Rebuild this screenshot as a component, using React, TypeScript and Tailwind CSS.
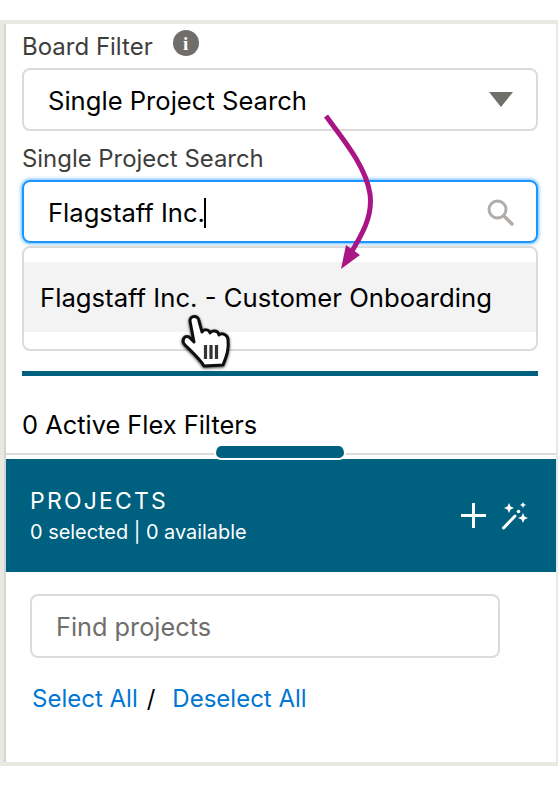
const font = { fontFamily: "Inter, 'Liberation Sans', sans-serif" }

function CurvedArrow() {
  return (
    <svg className="absolute left-[320px] top-[110px]" width="60" height="165" viewBox="0 0 60 165" fill="none">
      <path d="M6 6C22 28 46 56 50 84C53 106 42 125 29 146" stroke="#aa1585" strokeWidth="5" />
      <path d="M21 159L40 145L26 135Z" fill="#aa1585" />
    </svg>
  )
}

function HandCursor() {
  return (
    <svg className="absolute left-[175px] top-[312px]" width="60" height="64" viewBox="0 0 60 64">
      <defs>
        <filter id="soft" x="-20%" y="-20%" width="140%" height="140%">
          <feDropShadow dx="0" dy="1" stdDeviation="1.8" floodColor="#000" floodOpacity="0.75" />
        </filter>
      </defs>
      <path
        d="M15 9C15 3 23 3 24 9L27 20C29 17 34 17 35 21C37 18 43 18 44 23C47 20 53 23 53 28C54 37 52 43 48 53L29 54C25 47 16 39 10 33C6 29 9 23 14 25L19 30Z"
        fill="#fff"
        stroke="#111"
        strokeWidth="3"
        strokeLinejoin="round"
        filter="url(#soft)"
      />
      <path d="M30.5 33V47M36 33V47M41.5 33V47" stroke="#333" strokeWidth="3.2" />
    </svg>
  )
}

function SearchIcon() {
  return (
    <svg width="28" height="28" viewBox="0 0 28 28" fill="none" stroke="#b0adab">
      <circle cx="11.5" cy="11.5" r="8.5" strokeWidth="3" />
      <path d="M18 18L26 26" strokeWidth="3.4" strokeLinecap="round" />
    </svg>
  )
}

function PlusIcon() {
  return (
    <svg width="25" height="25" viewBox="0 0 25 25" fill="none" stroke="#fff" strokeWidth="3">
      <path d="M12.5 0V25M0 12.5H25" />
    </svg>
  )
}

function WandIcon() {
  return (
    <svg width="30" height="30" viewBox="5 3 30 30" fill="#fff">
      <path d="M8.5 30L20 18" stroke="#fff" strokeWidth="3" strokeLinecap="round" />
      <path d="M14 5L15.6 8.4L19 10L15.6 11.6L14 15L12.4 11.6L9 10L12.4 8.4Z" />
      <path d="M28 4L29 6L31 7L29 8L28 10L27 8L25 7L27 6Z" />
      <path d="M28 15L29.5 18.5L33 20L29.5 21.5L28 25L26.5 21.5L23 20L26.5 18.5Z" />
      <circle cx="23.5" cy="13.5" r="1.8" />
    </svg>
  )
}

export default function App() {
  return (
    <div className="relative h-[790px] w-[558px] overflow-hidden bg-white pt-[20px]" style={font}>
      <div className="h-[746px] border-y-4 border-r-2 border-l-4 border-[#e9e9e3]">
        <div className="flex h-full flex-col border-l-2 border-[#d4d4d2]">
          <div className="px-[16px]">
            <div className="flex h-[44px] items-center gap-[20px]">
              <span className="pt-[2px] text-[24px] leading-none text-[#3e3e3c]">Board Filter</span>
              <span className="-mt-[6px] flex h-[26px] w-[26px] items-center justify-center rounded-full bg-[#706e6b]">
                <span className="text-[19px] leading-none font-black text-white" style={{ fontFamily: "'Liberation Serif', serif" }}>i</span>
              </span>
            </div>
            <div className="flex h-[63px] w-[516px] items-center justify-between rounded-[8px] border-2 border-[#dddbda] pr-[23px] pl-[24px]">
              <span className="pt-[3px] text-[25.6px] leading-none text-black">Single Project Search</span>
              <span className="h-0 w-0 border-x-[12px] border-t-[15px] border-x-transparent border-t-[#706e6b]" />
            </div>
            <div className="flex h-[49px] items-center pt-[7px]">
              <span className="text-[23.9px] leading-none text-[#3e3e3c]">Single Project Search</span>
            </div>
            <div className="flex h-[63px] w-[516px] items-center justify-between rounded-[8px] border-2 border-[#1b96ff] pr-[22px] pl-[24px] shadow-[0_0_4px_#1b96ff]">
              <span className="flex items-center pt-[3px] text-[25.6px] leading-none text-black">
                Flagstaff Inc.
                <span className="-ml-[1px] h-[30px] w-[2px] bg-black" />
              </span>
              <SearchIcon />
            </div>
            <div className="mt-[3px] h-[105px] w-[516px] rounded-[8px] border-2 border-[#dddbda] pt-[14px]">
              <div className="flex h-[70px] items-center bg-[#f3f3f3] pt-[2px] pl-[16px] text-[25.7px] leading-none text-black">
                Flagstaff Inc. - Customer Onboarding
              </div>
            </div>
            <div className="mt-[20px] h-[5px] w-[516px] bg-[#006080]" />
            <div className="mt-[36px] text-[25.4px] leading-none text-black">0 Active Flex Filters</div>
          </div>
          <div className="relative mt-[16px] mb-[4px] h-[2px] bg-[#dddbda]">
            <div className="absolute top-[-7px] left-[208px] z-10 h-[14px] w-[132px] rounded-[8px] border-2 border-t-0 border-white bg-[#006080]" />
          </div>
          <div className="flex h-[113px] items-center justify-between bg-[#006080] pr-[26px] pl-[24px] text-white">
            <div>
              <div className="text-[23px] leading-[30px] font-normal tracking-[2.2px]">PROJECTS</div>
              <div className="mt-[3px] text-[19.9px] leading-[26px]">0 selected | 0 available</div>
            </div>
            <div className="flex items-center gap-[14px]">
              <PlusIcon />
              <WandIcon />
            </div>
          </div>
          <div className="px-[24px] pt-[22px]">
            <div className="flex h-[64px] w-[470px] items-center rounded-[8px] border-2 border-[#dddbda] pl-[24px] text-[25.3px] leading-none text-[#706e6b]">
              Find projects
            </div>
            <div className="mt-[29px] flex items-center pl-[3px] text-[24px] leading-none">
              <a className="-ml-px text-[#0176d3]">Select All</a>
              <span className="ml-[9px] text-black">/</span>
              <a className="ml-[17px] text-[#0176d3]">Deselect All</a>
            </div>
          </div>
        </div>
      </div>
      <CurvedArrow />
      <HandCursor />
    </div>
  )
}
